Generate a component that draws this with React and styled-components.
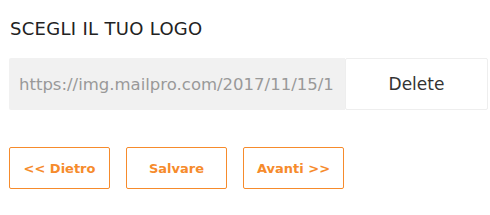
import React from 'react';
import styled, { createGlobalStyle } from 'styled-components';

const Global = createGlobalStyle`
    body {
        margin: 0;
        background: #fff;
        font-family: "DejaVu Sans", Verdana, sans-serif;
    }
`;

function App() {
    return (
        <>
            <Global />
            <Container>
                <Heading>SCEGLI IL TUO LOGO</Heading>
                <Row>
                    <UrlInput readOnly value="https://img.mailpro.com/2017/11/15/1" />
                    <Delete>Delete</Delete>
                </Row>
                <Buttons>
                    <Orange>&lt;&lt; Dietro</Orange>
                    <Orange>Salvare</Orange>
                    <Orange>Avanti &gt;&gt;</Orange>
                </Buttons>
            </Container>
        </>
    );
}

const Container = styled.section`
    padding: 18px 2px 0 9px;
`;
const Heading = styled.h3`
    margin: 0 0 18px 1px;
    font-size: 18px;
    font-weight: normal;
    letter-spacing: 0.3px;
    color: #222;
    line-height: 22px;
`;
const Row = styled.div`
    display: flex;
    height: 52px;
`;
const UrlInput = styled.input`
    width: 336px;
    box-sizing: border-box;
    border: none;
    outline: none;
    background: #f1f1f1;
    border-radius: 2px 0 0 2px;
    padding: 0 6px 0 10px;
    font-family: inherit;
    font-size: 16.5px;
    color: #999;
`;
const Delete = styled.button`
    width: 143px;
    box-sizing: border-box;
    background: #fff;
    border: 1px solid #eee;
    border-radius: 2px;
    font-family: inherit;
    font-size: 17px;
    color: #333;
    cursor: pointer;
`;
const Buttons = styled.div`
    display: flex;
    gap: 16px;
    margin-top: 37px;
`;
const Orange = styled.button`
    width: 101px;
    height: 42px;
    box-sizing: border-box;
    background: #fff;
    border: 1px solid #f68b2c;
    border-radius: 2px;
    font-family: inherit;
    font-size: 13px;
    font-weight: bold;
    color: #f68b2c;
    cursor: pointer;
`;

export default App;
